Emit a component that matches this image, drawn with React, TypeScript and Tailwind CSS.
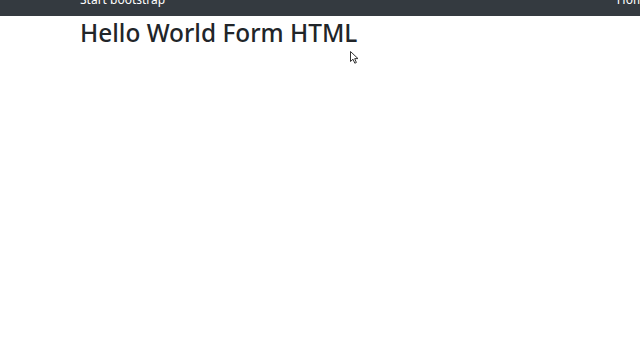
export default function App() {
  return (
    <div className="relative min-h-[360px] bg-white" style={{ fontFamily: '"Noto Sans", "Open Sans", sans-serif' }}>
      <nav className="h-4 overflow-hidden bg-[#343a40]">
        <div className="-mt-[12px] flex items-center justify-between pl-20 text-white">
          <span className="text-[12px] leading-6">Start bootstrap</span>
          <span className="mr-[-11px] text-[12px] leading-6">Home</span>
        </div>
      </nav>
      <main className="pl-20">
        <h1 className="mt-[1px] text-[24.4px] font-medium leading-8 text-[#212529]">Hello World Form HTML</h1>
      </main>
      <svg className="absolute left-[350px] top-[51px]" width="9" height="13" viewBox="0 0 9 13">
        <path d="M0.5 0.5 L0.5 10.5 L3 8.2 L4.8 12.2 L6.4 11.5 L4.7 7.6 L8 7.6 Z" fill="white" stroke="#333" strokeWidth="1" />
      </svg>
    </div>
  );
}
